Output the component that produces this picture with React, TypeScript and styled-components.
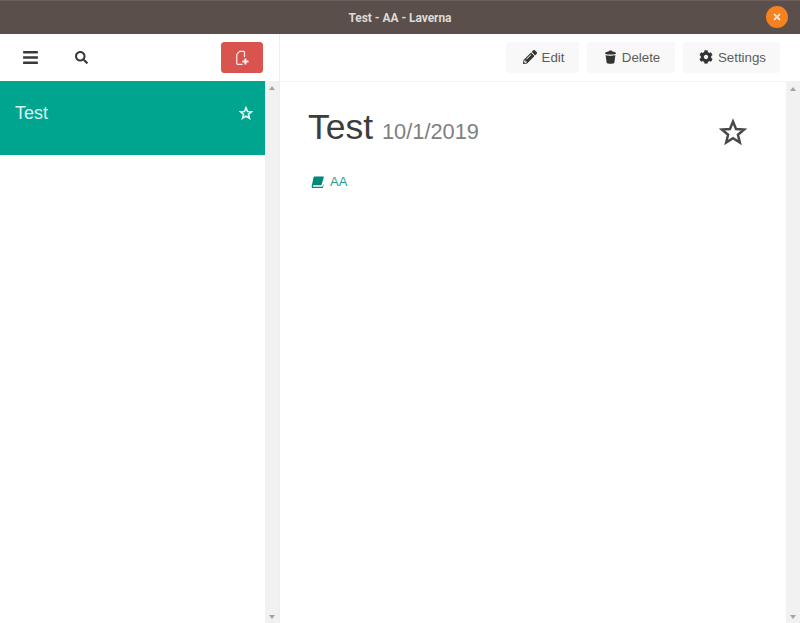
import React from "react";
import styled, { createGlobalStyle } from "styled-components";
import { FaBars, FaSearch, FaPencilAlt, FaCog, FaTimes } from "react-icons/fa";

const GlobalStyle = createGlobalStyle`
  html, body {
    margin: 0;
    padding: 0;
    background: #fff;
    font-family: "Liberation Sans", Arial, sans-serif;
    overflow: hidden;
  }
`;

const Window = styled.div`
  width: 800px;
  height: 623px;
  display: flex;
  flex-direction: column;
  overflow: hidden;
`;

const TitleBar = styled.header`
  height: 34px;
  flex: none;
  display: flex;
  align-items: center;
  justify-content: center;
  background: #5a4f4a;
  border-top: 1px solid #6a5f5a;
  box-sizing: border-box;
  position: relative;
`;

const WindowTitle = styled.span`
  font-family: Roboto, "Liberation Sans", sans-serif;
  font-size: 12px;
  font-weight: 700;
  letter-spacing: -0.05px;
  color: #dedad7;
`;

const CloseButton = styled.span`
  position: absolute;
  right: 12px;
  top: 5px;
  width: 22px;
  height: 22px;
  border-radius: 50%;
  background: #f5811f;
  color: #fbe6d8;
  font-size: 10px;
  display: flex;
  align-items: center;
  justify-content: center;
`;

const Body = styled.div`
  flex: 1;
  display: flex;
  min-height: 0;
`;

const Sidebar = styled.aside`
  width: 280px;
  flex: none;
  display: flex;
  flex-direction: column;
  border-right: 1px solid #eeeeee;
  box-sizing: border-box;
`;

const SideToolbar = styled.div`
  height: 47px;
  flex: none;
  display: flex;
  align-items: center;
  padding: 0 16px 0 22px;
  color: #3a3a3a;
`;

const ToolIcon = styled.span<{ $gap: number; $size: number }>`
  display: flex;
  margin-right: ${(p) => p.$gap}px;
  font-size: ${(p) => p.$size}px;
`;

const NewButton = styled.button`
  margin-left: auto;
  width: 42px;
  height: 31px;
  padding: 0;
  display: flex;
  align-items: center;
  justify-content: center;
  background: #d9534f;
  border: 1px solid #d9534f;
  border-radius: 3px;
`;

const ScrollArea = styled.div`
  flex: 1;
  display: flex;
  min-height: 0;
`;

const NoteList = styled.div`
  flex: 1;
  min-width: 0;
`;

const NoteItem = styled.div`
  height: 74px;
  display: flex;
  justify-content: space-between;
  padding: 22px 12px 0 15px;
  box-sizing: border-box;
  background: #00a590;
  color: #d9f2ee;
  font-size: 18px;
  line-height: 21px;
`;

const ItemStar = styled.span`
  display: flex;
  margin-top: 3px;
`;

const Scrollbar = styled.div`
  width: 14px;
  flex: none;
  display: flex;
  flex-direction: column;
  justify-content: space-between;
  align-items: center;
  padding: 5px 0 4px;
  box-sizing: border-box;
  background: #f1f1f1;
`;

const Arrow = styled.span<{ $down?: boolean }>`
  width: 0;
  height: 0;
  border-left: 3.5px solid transparent;
  border-right: 3.5px solid transparent;
  border-${(p) => (p.$down ? "top" : "bottom")}: 4px solid #a3a3a3;
`;

const Main = styled.main`
  flex: 1;
  min-width: 0;
  display: flex;
  flex-direction: column;
`;

const MainToolbar = styled.div`
  height: 48px;
  flex: none;
  display: flex;
  align-items: center;
  justify-content: flex-end;
  gap: 8px;
  padding: 0 20px 1px 0;
  box-sizing: border-box;
  border-bottom: 1px solid #f3f3f3;
`;

const ActionButton = styled.button<{ $width: number }>`
  width: ${(p) => p.$width}px;
  height: 31px;
  padding: 0 0 0 2px;
  display: flex;
  align-items: center;
  justify-content: center;
  gap: 5px;
  background: #f8f8f8;
  border: 1px solid #f8f8f8;
  border-radius: 3px;
  color: #5c5c5c;
  font-family: "Liberation Sans", Arial, sans-serif;
  font-size: 13.3px;

  svg {
    color: #333;
  }
`;

const NotePane = styled.div`
  flex: 1;
  min-width: 0;
  padding: 24px 39px 0 28px;
`;

const NoteHeader = styled.div`
  display: flex;
  justify-content: space-between;
  align-items: flex-start;
`;

const NoteTitle = styled.h1`
  margin: 0;
  font-size: 35.5px;
  line-height: 42px;
  font-weight: 400;
  color: #3c3c3c;
`;

const NoteDate = styled.small`
  font-size: 21.8px;
  color: #808080;
  margin-left: -1px;
`;

const BigStar = styled.span`
  display: flex;
  margin-top: 12px;
`;

const NotebookLink = styled.div`
  display: flex;
  align-items: center;
  gap: 6px;
  margin: 21px 0 0 3px;
  font-size: 13px;
  line-height: 16px;
  color: #2b9c8d;
`;

// outlined five point star, used in the list and on the note
const StarIcon = ({ size, color, width }: { size: number; color: string; width: number }) => (
  <svg width={size} height={size} viewBox="0 0 24 24" fill="none" stroke={color} strokeWidth={width} strokeLinejoin="miter">
    <path d="M12 3l2.6 6.4 6.9.5-5.3 4.5 1.7 6.7-5.9-3.7-5.9 3.7 1.7-6.7-5.3-4.5 6.9-.5z" />
  </svg>
);

const NewNoteIcon = () => (
  <svg width="16" height="16" viewBox="0 0 16 16" fill="none">
    <path d="M10.5 7V2.2a.8.8 0 0 0-.8-.8H5.6L2.8 4.4v9.2a.8.8 0 0 0 .8.8h4.9" stroke="#fbeeed" strokeWidth="1.2" strokeLinejoin="miter" />
    <path d="M11.4 8.4v6.2M8.3 11.5h6.2" stroke="#fbeeed" strokeWidth="2" />
  </svg>
);

const BucketIcon = () => (
  <svg width="13" height="14" viewBox="0 0 13 14" fill="#333">
    <path d="M1 3.2C1 2 3.5 1.5 4.6 1.4 4.8.6 5.5.4 6.5.4s1.7.2 1.9 1C9.5 1.5 12 2 12 3.2 12 4.2 9 4.6 6.5 4.6S1 4.2 1 3.2z" />
    <path d="M1.6 5c1.2.6 3.2.8 4.9.8s3.7-.2 4.9-.8l-1 7.4c-.2 1-2 1.3-3.9 1.3s-3.7-.3-3.9-1.3z" />
  </svg>
);

// slanted closed book, the font's version of the notebook glyph
const NotebookIcon = () => (
  <svg width="13" height="12" viewBox="0 0 13 12">
    <path d="M3.4.5h8.8c.5 0 .7.4.6.8L10.7 8.6c-.1.4-.4.6-.8.6H2.6c-.6 0-.8.5-.7.8.1.4.4.7.9.7h8.3c.3 0 .5-.2.6-.5l.5-1.8.6.3-1 3.3c-.1.3-.4.5-.7.5H2.4C1.2 12.5.4 11.4.7 10L2.6 1.2c.1-.4.4-.7.8-.7z" fill="#00897b" />
  </svg>
);

export default function App() {
  return (
    <Window>
      <GlobalStyle />
      <TitleBar>
        <WindowTitle>Test - AA - Laverna</WindowTitle>
        <CloseButton>
          <FaTimes />
        </CloseButton>
      </TitleBar>
      <Body>
        <Sidebar>
          <SideToolbar>
            <ToolIcon $gap={36} $size={17}>
              <FaBars />
            </ToolIcon>
            <ToolIcon $gap={0} $size={13}>
              <FaSearch />
            </ToolIcon>
            <NewButton>
              <NewNoteIcon />
            </NewButton>
          </SideToolbar>
          <ScrollArea>
            <NoteList>
              <NoteItem>
                Test
                <ItemStar>
                  <StarIcon size={14} color="#e6f6f3" width={2.8} />
                </ItemStar>
              </NoteItem>
            </NoteList>
            <Scrollbar>
              <Arrow />
              <Arrow $down />
            </Scrollbar>
          </ScrollArea>
        </Sidebar>
        <Main>
          <MainToolbar>
            <ActionButton $width={73}>
              <FaPencilAlt size={14} />
              Edit
            </ActionButton>
            <ActionButton $width={88}>
              <BucketIcon />
              Delete
            </ActionButton>
            <ActionButton $width={97}>
              <FaCog size={14} />
              Settings
            </ActionButton>
          </MainToolbar>
          <ScrollArea>
            <NotePane>
              <NoteHeader>
                <NoteTitle>
                  Test <NoteDate>10/1/2019</NoteDate>
                </NoteTitle>
                <BigStar>
                  <StarIcon size={28} color="#484848" width={2.1} />
                </BigStar>
              </NoteHeader>
              <NotebookLink>
                <NotebookIcon />
                AA
              </NotebookLink>
            </NotePane>
            <Scrollbar>
              <Arrow />
              <Arrow $down />
            </Scrollbar>
          </ScrollArea>
        </Main>
      </Body>
    </Window>
  );
}
